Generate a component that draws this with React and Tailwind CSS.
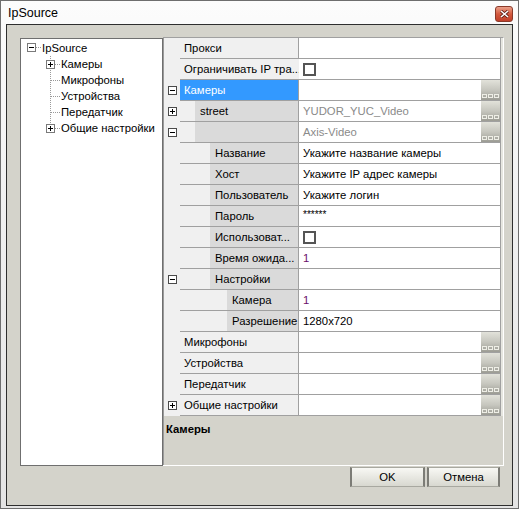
import React from "react";

const font = "font-['Liberation_Sans',Arial,sans-serif]";

const rows = [
  { level: 0, name: "Прокси" },
  { level: 0, name: "Ограничивать IP тра...", check: true },
  { gut: "-", level: 0, name: "Камеры", selected: true, btn: true },
  { gut: "+", level: 1, name: "street", value: "YUDOR_YUC_Video", tone: "gray", btn: true },
  { gut: "-", level: 1, name: "", value: "Axis-Video", tone: "gray", btn: true },
  { level: 2, name: "Название", value: "Укажите название камеры" },
  { level: 2, name: "Хост", value: "Укажите IP адрес камеры" },
  { level: 2, name: "Пользователь", value: "Укажите логин" },
  { level: 2, name: "Пароль", value: "******", tone: "pwd" },
  { level: 2, name: "Использоват...", check: true },
  { level: 2, name: "Время ожида...", value: "1", tone: "purple" },
  { gut: "-", level: 2, name: "Настройки" },
  { level: 3, name: "Камера", value: "1", tone: "purple" },
  { level: 3, name: "Разрешение", value: "1280x720" },
  { level: 0, name: "Микрофоны", btn: true },
  { level: 0, name: "Устройства", btn: true },
  { level: 0, name: "Передатчик", btn: true },
  { gut: "+", level: 0, name: "Общие настройки", btn: true },
];

const indents = { 1: "w-[15px]", 2: "w-[30px]", 3: "w-[47px]" };

function Expander({ sign }) {
  return (
    <svg width="9" height="9" viewBox="0 0 9 9" className="block">
      <rect x="0.5" y="0.5" width="8" height="8" fill="#fff" stroke="#4a4a4a" />
      <line x1="2" y1="4.5" x2="7" y2="4.5" stroke="#000" />
      {sign === "+" && <line x1="4.5" y1="2" x2="4.5" y2="7" stroke="#000" />}
    </svg>
  );
}

function DotsButton() {
  return (
    <div className="ml-auto flex h-full w-[19px] items-end justify-center gap-[1px] bg-gradient-to-b from-[#e2e2da] via-[#c6c6be] to-[#9c9c94] pb-[2px]">
      <span className="h-[4px] w-[5px] border border-[#eeeee6]" />
      <span className="h-[4px] w-[5px] border border-[#eeeee6]" />
      <span className="h-[4px] w-[5px] border border-[#eeeee6]" />
    </div>
  );
}

function Checkbox() {
  return <span className="block h-[13px] w-[13px] border-2 border-[#555] bg-white" />;
}

function GridRow({ row }) {
  const toneClass =
    row.tone === "gray"
      ? "text-[#8a8a8a]"
      : row.tone === "purple"
      ? "text-[#6a0f6a]"
      : row.tone === "pwd"
      ? "text-[#000] text-[10px] -mt-[4px]"
      : "text-black";
  return (
    <div className="flex h-[21px]">
      <div className="flex w-[17px] items-center justify-center border-l border-[#9a9a9a] bg-[#f0f0f0] pl-[1px]">
        {row.gut && <Expander sign={row.gut} />}
      </div>
      <div className="flex flex-1 border-b border-[#a0a0a0]">
        <div className="flex w-[119px] border-r border-[#a0a0a0]">
          {row.selected ? (
            <div className="flex flex-1 items-center bg-[#3399ff] pl-[4px] text-white">{row.name}</div>
          ) : row.level === 0 ? (
            <div className="flex flex-1 items-center bg-[#f0f0f0] pl-[4px] whitespace-nowrap">{row.name}</div>
          ) : (
            <>
              <div className={`${indents[row.level]} bg-[#f0f0f0]`} />
              <div className="flex flex-1 items-center bg-[#dadada] pl-[5px] whitespace-nowrap">{row.name}</div>
            </>
          )}
        </div>
        <div className="flex flex-1 items-center bg-white pl-[4px]">
          {row.check && <Checkbox />}
          {row.value && <span className={toneClass}>{row.value}</span>}
          {row.btn && <DotsButton />}
        </div>
      </div>
    </div>
  );
}

function TreeChild({ label, sign, last }) {
  return (
    <div className="flex h-[16px] items-center">
      <svg width="20" height="16" viewBox="0 0 20 16" className="block shrink-0">
        <line x1="9.5" y1="0" x2="9.5" y2={last ? 8 : 16} stroke="#9a9a9a" strokeDasharray="1 1" />
        <line x1="10" y1="8.5" x2="19" y2="8.5" stroke="#9a9a9a" strokeDasharray="1 1" />
        {sign && (
          <g transform="translate(5 4)">
            <rect x="0.5" y="0.5" width="8" height="8" fill="#fff" stroke="#7a7a7a" />
            <line x1="2" y1="4.5" x2="7" y2="4.5" stroke="#000" />
            <line x1="4.5" y1="2" x2="4.5" y2="7" stroke="#000" />
          </g>
        )}
      </svg>
      <span className="whitespace-nowrap">{label}</span>
    </div>
  );
}

export default function App() {
  return (
    <div className={`${font} flex h-[509px] w-[519px] flex-col border border-[#6e6e6e] bg-gradient-to-b from-[#fcfcfc] via-[#eeeeee] to-[#e4e4e4] text-[11.3px] text-black`}>
      {/* caption */}
      <div className="flex h-[23px] items-center justify-between pl-[7px] pr-[5px]">
        <span className="mt-[1px] text-[12.5px] text-black">IpSource</span>
        <div className="mt-[2px] flex h-[16px] w-[18px] items-center justify-center rounded-[3px] border border-[#8a3a2a] bg-gradient-to-b from-[#eaa08a] via-[#d45a3e] to-[#c0402a]">
          <svg width="9" height="8" viewBox="0 0 9 8">
            <path d="M1 1 L8 7 M8 1 L1 7" stroke="#5a1a10" strokeWidth="3" />
            <path d="M1 1 L8 7 M8 1 L1 7" stroke="#fff" strokeWidth="1.6" />
          </svg>
        </div>
      </div>

      {/* client area */}
      <div className="mx-[5px] flex h-[482px] flex-col border border-[#2e2e2e] bg-[#d4d3cb] pl-[13px] pt-[12px]">
        <div className="flex h-[429px] pr-[8px]">
          <div className="mt-[1px] h-[428px] w-[143px] border border-[#6f6f6f] bg-white pl-[6px] pt-[1px]">
            <div className="flex h-[16px] items-center">
              <svg width="15" height="16" viewBox="0 0 15 16" className="block shrink-0">
                <rect x="0.5" y="3.5" width="8" height="8" fill="#fff" stroke="#7a7a7a" />
                <line x1="2" y1="7.5" x2="7" y2="7.5" stroke="#000" />
                <line x1="9" y1="7.5" x2="15" y2="7.5" stroke="#9a9a9a" strokeDasharray="1 1" />
              </svg>
              <span>IpSource</span>
            </div>
            <div className="pl-[14px]">
              <TreeChild label="Камеры" sign="+" />
              <TreeChild label="Микрофоны" />
              <TreeChild label="Устройства" />
              <TreeChild label="Передатчик" />
              <TreeChild label="Общие настройки" sign="+" last />
            </div>
          </div>

          {/* property grid */}
          <div className="flex w-[341px] flex-col border-b border-r border-t border-b-white border-r-white border-t-[#a0a0a0]">
            <div className="flex">
              <div className="flex-1">
                {rows.map((r, i) => (
                  <GridRow key={i} row={r} />
                ))}
              </div>
              <div className="w-[3px] border-l border-[#a0a0a0] bg-[#e6e6e0]" />
            </div>
            <div className="flex-1 border-l border-[#9a9a9a] pl-[2px] pt-[5px] font-bold">Камеры</div>
          </div>
        </div>

        <div className="mt-[1px] flex justify-end gap-[2px] pr-[12px]">
          <button className="flex h-[20px] w-[75px] items-center justify-center border-x-2 border-y border-x-[#7c7c76] border-y-[#a8a8a0] bg-gradient-to-b from-[#f8f8f4] to-[#d8d8d0] text-[11.3px]">
            OK
          </button>
          <button className="flex h-[20px] w-[73px] items-center justify-center border-x-2 border-y border-x-[#7c7c76] border-y-[#a8a8a0] bg-gradient-to-b from-[#f8f8f4] to-[#d8d8d0] text-[11.3px]">
            Отмена
          </button>
        </div>
      </div>
    </div>
  );
}
